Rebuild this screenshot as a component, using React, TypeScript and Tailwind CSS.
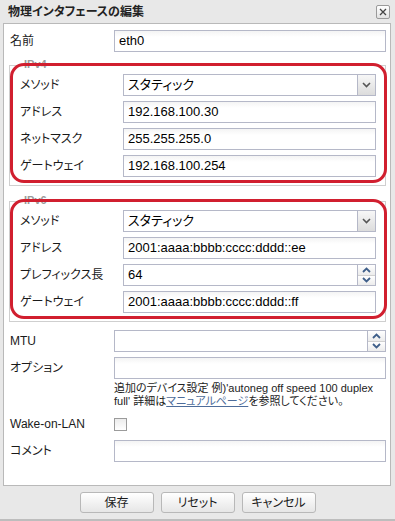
import type { ReactNode } from 'react'

const font = "font-['Liberation_Sans','Noto_Sans_CJK_JP',sans-serif] [font-feature-settings:'palt']"

function TextBox({ value, w = 'w-[253px]' }: { value?: string; w?: string }) {
  return (
    <div className={`${w} h-[22px] border border-[#b5b8c8] bg-gradient-to-b from-[#f4f4f4] to-white to-[30%] flex items-center px-[4px] text-[13px] text-black`}>
      {value}
    </div>
  )
}

function SelectBox({ value }: { value: string }) {
  return (
    <div className="w-[253px] h-[22px] border border-[#b5b8c8] bg-white flex items-stretch text-[13px] text-black">
      <div className="flex-1 flex items-center px-[4px]">{value}</div>
      <div className="w-[18px] border-l border-[#b5b8c8] bg-gradient-to-b from-[#f7f7f7] to-[#dcdcdc] flex items-center justify-center">
        <svg width="9" height="6" viewBox="0 0 9 6"><path d="M1 1l3.5 3.5L8 1" fill="none" stroke="#555" strokeWidth="1.6" /></svg>
      </div>
    </div>
  )
}

function SpinBox({ value, w = 'w-[253px]' }: { value?: string; w?: string }) {
  return (
    <div className={`${w} h-[22px] border border-[#b5b8c8] bg-white flex items-stretch text-[13px] text-black`}>
      <div className="flex-1 flex items-center px-[4px]">{value}</div>
      <div className="w-[18px] border-l border-[#b5b8c8] flex flex-col">
        <div className="flex-1 flex items-center justify-center bg-gradient-to-b from-white to-[#ececec] border-b border-[#d0d0d0]">
          <svg width="9" height="6" viewBox="0 0 9 6"><path d="M1 5l3.5-3.5L8 5" fill="none" stroke="#3f5f8a" strokeWidth="1.8" /></svg>
        </div>
        <div className="flex-1 flex items-center justify-center bg-gradient-to-b from-white to-[#ececec]">
          <svg width="9" height="6" viewBox="0 0 9 6"><path d="M1 1l3.5 3.5L8 1" fill="none" stroke="#3f5f8a" strokeWidth="1.8" /></svg>
        </div>
      </div>
    </div>
  )
}

function Row({ label, children, lw = 'w-[103px]' }: { label: string; children: ReactNode; lw?: string }) {
  return (
    <div className="flex items-center">
      <div className={`${lw} text-[12px] text-[#1a1a1a]`}>{label}</div>
      {children}
    </div>
  )
}

function Group({ legend, children }: { legend: string; children: ReactNode }) {
  return (
    <div className="relative -ml-[1px] w-[377px] border border-[#cfcfcf] pt-[8px] pb-[8px] pl-[10px] flex flex-col gap-[5px]">
      <span className="absolute -top-[7px] left-[12px] px-[2px] bg-white text-[11px] font-bold text-[#9a9a9a] leading-none">{legend}</span>
      {children}
      {/* red annotation */}
      <div className="absolute -top-[3px] bottom-[2px] left-0 -right-[2px] border-[3px] border-[#d11f2f] rounded-[14px] pointer-events-none" />
    </div>
  )
}

function Button({ label }: { label: string }) {
  return (
    <div className="w-[74px] h-[21px] border border-[#b8b8b8] rounded-[3px] bg-gradient-to-b from-white to-[#e6e6e6] flex items-center justify-center text-[12px] text-[#1a1a1a]">
      {label}
    </div>
  )
}

export default function App() {
  return (
    <div className={`w-[395px] h-[521px] bg-[#e8e8e8] flex flex-col border-b-2 border-[#bdbdbd] ${font}`}>
      {/* title bar */}
      <div className="h-[23px] flex items-center justify-between pl-[8px] pr-[5px]">
        <span className="text-[12px] font-bold text-[#222]">物理インタフェースの編集</span>
        <div className="w-[14px] h-[14px] border border-[#9a9a9a] rounded-[2px] bg-gradient-to-b from-white to-[#e2e2e2] flex items-center justify-center">
          <svg width="8" height="8" viewBox="0 0 8 8"><path d="M1 1l6 6M7 1L1 7" stroke="#444" strokeWidth="1.3" /></svg>
        </div>
      </div>

      {/* body */}
      <div className="mx-[3px] w-[388px] h-[463px] border border-[#b9b9b9] bg-white pt-[6px] pl-[6px] flex flex-col">
        <Row label="名前" lw="w-[104px]">
          <TextBox value="eth0" w="w-[272px]" />
        </Row>

        <div className="mt-[13px]">
          <Group legend="IPv4">
            <Row label="メソッド"><SelectBox value="スタティック" /></Row>
            <Row label="アドレス"><TextBox value="192.168.100.30" /></Row>
            <Row label="ネットマスク"><TextBox value="255.255.255.0" /></Row>
            <Row label="ゲートウェイ"><TextBox value="192.168.100.254" /></Row>
          </Group>
        </div>

        <div className="mt-[15px]">
          <Group legend="IPv6">
            <Row label="メソッド"><SelectBox value="スタティック" /></Row>
            <Row label="アドレス"><TextBox value="2001:aaaa:bbbb:cccc:dddd::ee" /></Row>
            <Row label="プレフィックス長"><SpinBox value="64" /></Row>
            <Row label="ゲートウェイ"><TextBox value="2001:aaaa:bbbb:cccc:dddd::ff" /></Row>
          </Group>
        </div>

        <div className="mt-[8px] flex flex-col gap-[5px]">
          <Row label="MTU" lw="w-[104px]"><SpinBox w="w-[272px]" /></Row>
          <div className="flex flex-col">
            <Row label="オプション" lw="w-[104px]"><TextBox w="w-[272px]" /></Row>
            <div className="ml-[104px] mt-[3px] text-[11px] leading-[13px] text-[#222]">
              追加のデバイス設定 例)'autoneg off speed 100 duplex<br />
              full' 詳細は<span className="text-[#4d6c9a] underline">マニュアルページ</span>を参照してください。
            </div>
          </div>
          <div className="h-[22px] flex items-center">
            <div className="w-[104px] text-[12px] text-[#1a1a1a]">Wake-on-LAN</div>
            <div className="w-[13px] h-[13px] border border-[#9b9b9b] bg-gradient-to-b from-[#ececec] to-white" />
          </div>
          <Row label="コメント" lw="w-[104px]"><TextBox w="w-[272px]" /></Row>
        </div>
      </div>

      {/* footer */}
      <div className="mt-[6px] flex justify-center gap-[7px]">
        <Button label="保存" />
        <Button label="リセット" />
        <Button label="キャンセル" />
      </div>
    </div>
  )
}
